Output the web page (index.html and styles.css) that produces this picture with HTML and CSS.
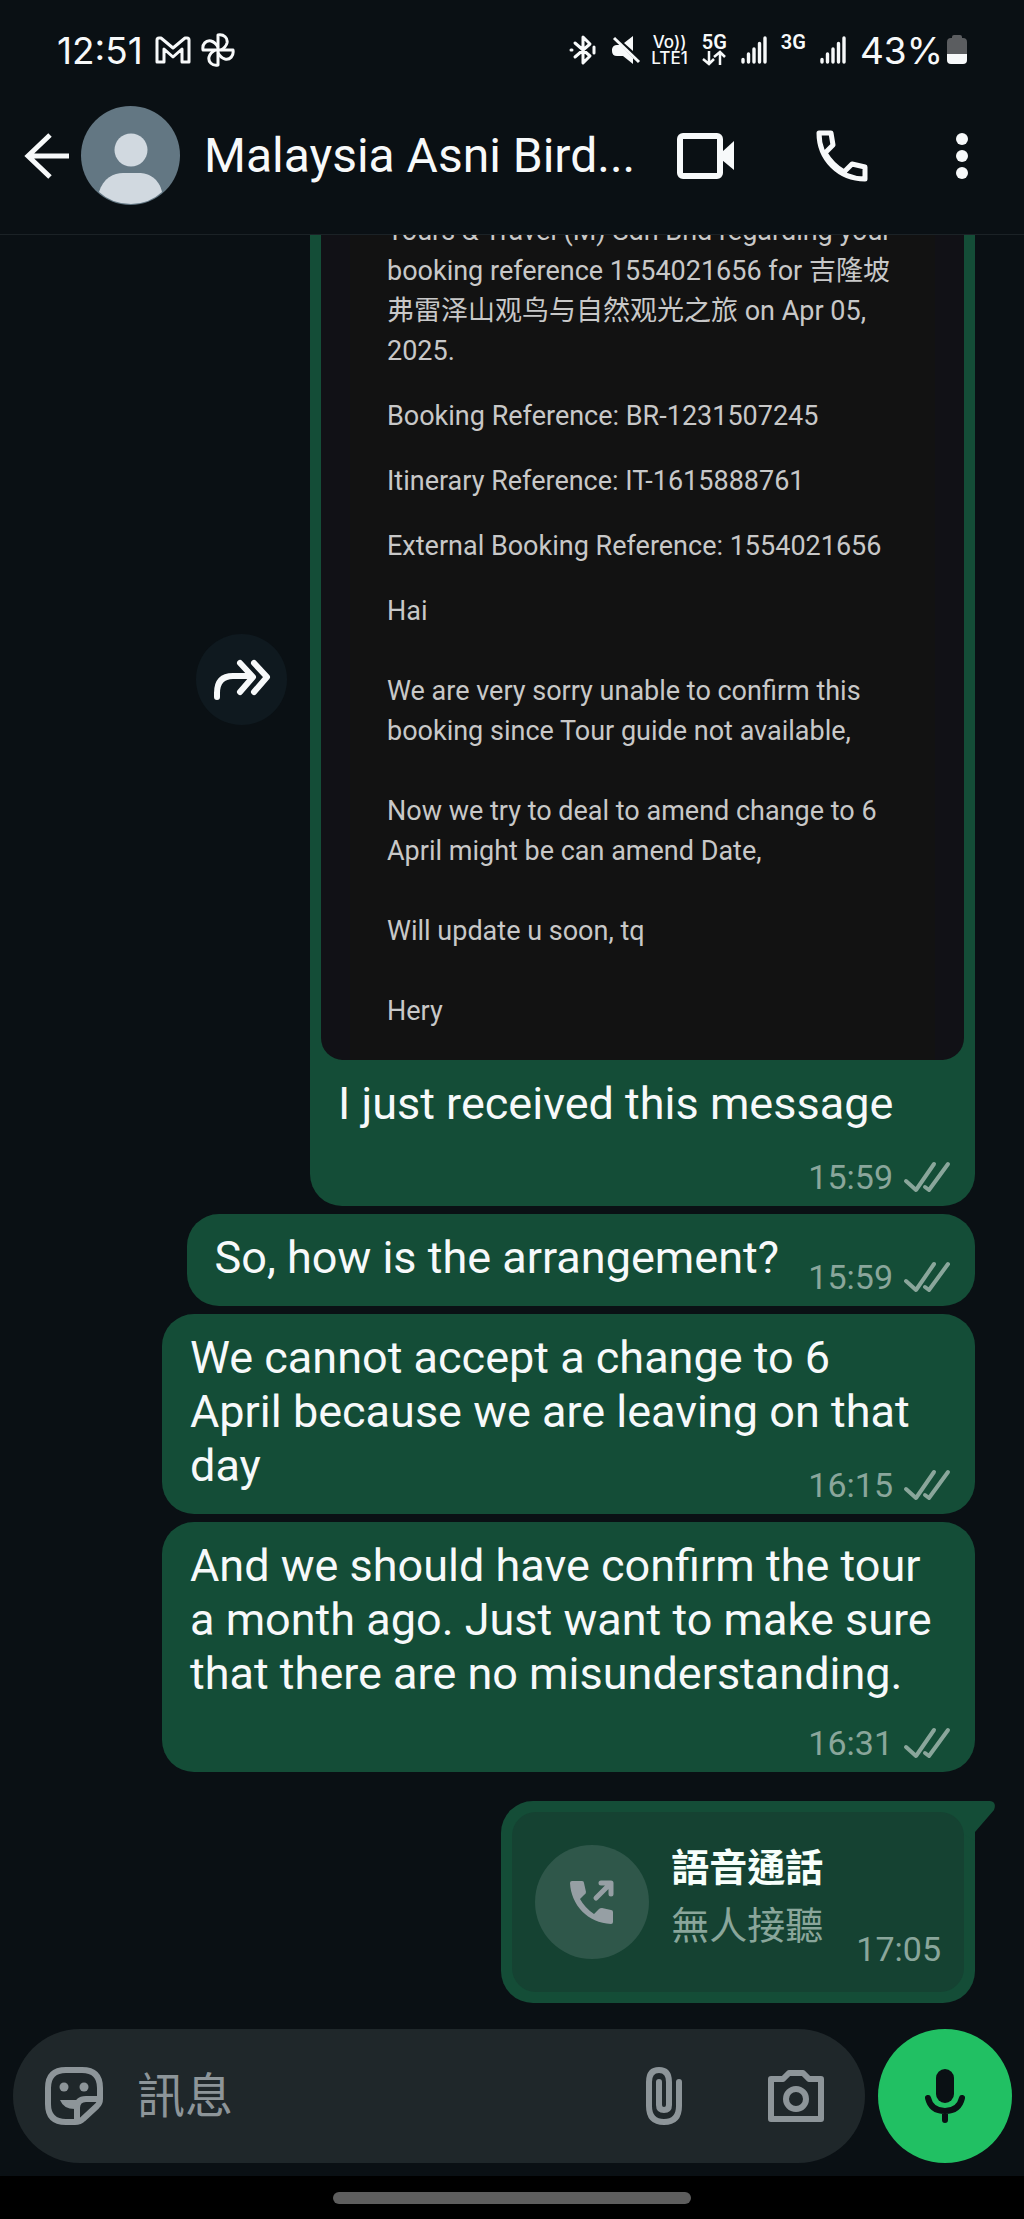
FILE: index.html
```html
<!DOCTYPE html>
<html lang="zh-Hant">
  <head>
    <meta charset="UTF-8" />
    <meta name="viewport" content="width=device-width, initial-scale=1.0" />
    <title>Malaysia Asni Bird</title>
    <link rel="stylesheet" href="styles.css">
  </head>
  <body>
    <!-- Shared icons -->
    <svg class="sprite" aria-hidden="true">
      <symbol id="ticks" viewBox="0 0 48 32">
        <path d="M3 20L13 29L31 3M22 26L26 29L45 3" fill="none" stroke="currentColor" stroke-width="4" stroke-linecap="round" stroke-linejoin="round" />
      </symbol>
      <symbol id="signal" viewBox="0 0 26 28">
        <path d="M2 23.500V26M7.500 18V26M13 13V26M18.500 7.500V26M24 2V26" fill="none" stroke="currentColor" stroke-width="3.400" stroke-linecap="round" />
      </symbol>
    </svg>

    <!-- Status bar -->
    <div class="status-bar">
      <span class="clock">12:51</span>
      <svg class="gmail" width="36" height="28" viewBox="0 0 36 28" fill="none" stroke="currentColor" stroke-width="3" stroke-linejoin="round">
        <path d="M2 4Q2 2 4 2H6L18 12L30 2H32Q34 2 34 4V26H27V13L18 21L9 13V26H2Z" />
      </svg>
      <svg width="34" height="34" viewBox="0 0 34 34" fill="none" stroke="currentColor" stroke-width="3" stroke-linejoin="round">
        <path d="M17 17V2C23 1 27 5 26 10Q25 14 20 17" />
        <path d="M17 17H32C33 23 29 27 24 26Q20 25 17 20" />
        <path d="M17 17V32C11 33 7 29 8 24Q9 20 14 17" />
        <path d="M17 17H2C1 11 5 7 10 8Q14 9 17 14" />
      </svg>
      <div class="status-right">
        <svg width="28" height="32" viewBox="0 0 28 32" fill="none" stroke="currentColor" stroke-width="3" stroke-linejoin="round" stroke-linecap="round">
          <path d="M6 9L21 22L14 29V3L21 10L6 23M2 16H3M25 13V19" />
        </svg>
        <svg class="mute" width="30" height="30" viewBox="0 0 30 30" fill="currentColor">
          <path d="M22 1V16L13 8ZM6 10H9L22 23V29L12 21H6Q1 21 1 16V14Q2 10 6 10Z" />
          <path d="M3 3L28 27" stroke="currentColor" stroke-width="3" />
        </svg>
        <span class="volte"><span>Vo))</span><span>LTE1</span></span>
        <span class="network">
          5G
          <svg width="24" height="16" viewBox="0 0 24 16" fill="none" stroke="currentColor" stroke-width="2.500">
            <path d="M7 1V14M1 9L7 14L12 9M18 15V2M12 7L18 2L23 7" />
          </svg>
        </span>
        <svg class="signal"><use href="#signal" /></svg>
        <span class="network">3G</span>
        <svg class="signal"><use href="#signal" /></svg>
        <span class="battery-level">43%</span>
        <svg width="20" height="30" viewBox="0 0 20 30" fill="currentColor">
          <path d="M5 2Q5 0 7 0H13Q15 0 15 2V3H16Q20 3 20 7V19H0V7Q0 3 4 3H5Z" fill="#5b5d60" />
          <path d="M0 19H20V25Q20 29 16 29H4Q0 29 0 25Z" />
        </svg>
      </div>
    </div>

    <!-- Chat header -->
    <header class="header">
      <button class="icon-button" aria-label="Back">
        <svg width="46" height="46" viewBox="0 0 46 46" fill="none" stroke="currentColor" stroke-width="5">
          <path d="M45 23H4M26 2L4 23L26 44" />
        </svg>
      </button>
      <svg class="avatar" viewBox="0 0 99 99">
        <circle cx="49.500" cy="49.500" r="49.500" fill="#637783" />
        <circle cx="50" cy="44" r="16.500" fill="#d1d9e0" />
        <path d="M18 86C22 72 33 67 42 67H58C67 67 78 72 81 86Q68 98 50 98Q31 98 18 86Z" fill="#d1d9e0" />
      </svg>
      <h1 class="title">Malaysia Asni Bird...</h1>
      <button class="icon-button" aria-label="Video call">
        <svg width="58" height="48" viewBox="0 0 58 48">
          <rect x="3" y="4" width="40" height="40" rx="3" fill="none" stroke="currentColor" stroke-width="6" />
          <path d="M45 20L57 9V38L45 28Z" fill="currentColor" />
        </svg>
      </button>
      <button class="icon-button call" aria-label="Voice call">
        <svg width="54" height="54" viewBox="0 0 54 54" fill="none" stroke="currentColor" stroke-width="5" stroke-linejoin="round">
          <path d="M4 4H16L18 16L10 24Q17 36 29 43L37 35L50 38V50C24 50 4 30 4 4Z" />
        </svg>
      </button>
      <button class="icon-button" aria-label="More options">
        <svg width="12" height="48" viewBox="0 0 12 48" fill="currentColor">
          <circle cx="6" cy="7" r="6" />
          <circle cx="6" cy="24" r="6" />
          <circle cx="6" cy="41" r="6" />
        </svg>
      </button>
    </header>

    <!-- Messages -->
    <main class="chat">
      <div class="row">
        <button class="forward" aria-label="Forward">
          <svg width="58" height="42" viewBox="0 0 58 42" fill="none" stroke="currentColor" stroke-width="6" stroke-linecap="round" stroke-linejoin="round">
            <path d="M4 38V34Q4 17 20 17H38M27 4L40 18L27 33M41 4L54 18L41 33" />
          </svg>
        </button>
        <div class="bubble photo-bubble">
          <div class="photo">
            <p>Tours &amp; Travel (M) Sdn Bhd regarding your<br>booking reference 1554021656 for 吉隆坡<br>弗雷泽山观鸟与自然观光之旅 on Apr 05,<br>2025.</p>
            <p>Booking Reference: BR-1231507245</p>
            <p>Itinerary Reference: IT-1615888761</p>
            <p>External Booking Reference: 1554021656</p>
            <p>Hai<br><br>We are very sorry unable to confirm this<br>booking since Tour guide not available,<br><br>Now we try to deal to amend change to 6<br>April might be can amend Date,<br><br>Will update u soon, tq<br><br>Hery</p>
          </div>
          <div class="message">
            <p class="text">I just received this message</p>
            <span class="meta">15:59 <svg class="ticks"><use href="#ticks" /></svg></span>
          </div>
        </div>
      </div>

      <div class="bubble message short">
        <p class="text">So, how is the arrangement?</p>
        <span class="meta">15:59 <svg class="ticks"><use href="#ticks" /></svg></span>
      </div>

      <div class="bubble message wide">
        <p class="text">We cannot accept a change to 6<br>April because we are leaving on that<br>day</p>
        <span class="meta">16:15 <svg class="ticks"><use href="#ticks" /></svg></span>
      </div>

      <div class="bubble message wide long">
        <p class="text">And we should have confirm the tour<br>a month ago. Just want to make sure<br>that there are no misunderstanding.</p>
        <span class="meta">16:31 <svg class="ticks"><use href="#ticks" /></svg></span>
      </div>

      <div class="bubble call-bubble">
        <svg class="tail" width="53" height="40" viewBox="0 0 53 40">
          <path d="M0 0H48Q55 1 52 9L33 31V40L0 20Z" fill="currentColor" />
        </svg>
        <div class="call-card">
          <div class="call-icon">
            <svg width="44" height="44" viewBox="0 0 44 44" fill="currentColor">
              <path d="M2 1H12Q14 1 14 3L16 12Q16 14 14 15L10 19Q15 28 24 34L29 29Q30 28 32 28L41 30Q43 30 43 32V42Q43 44 41 44C18 43 1 25 0 3Q0 1 2 1Z" />
              <path d="M26 18L39 5M31 3H41V14" fill="none" stroke="currentColor" stroke-width="5" stroke-linecap="round" stroke-linejoin="round" />
            </svg>
          </div>
          <div class="call-text">
            <strong>語音通話</strong>
            <span>無人接聽</span>
          </div>
          <span class="call-time">17:05</span>
        </div>
      </div>
    </main>

    <!-- Composer -->
    <form class="composer">
      <div class="composer-field">
        <button type="button" class="icon-button" aria-label="Stickers">
          <svg width="58" height="58" viewBox="0 0 58 58">
            <path d="M21 3H37Q55 3 55 21V32Q55 36 52 39L38 52Q35 55 30 55H21Q3 55 3 37V21Q3 3 21 3Z" fill="none" stroke="currentColor" stroke-width="6" />
            <path d="M32 54V41Q32 32 41 32H55" fill="none" stroke="currentColor" stroke-width="6" />
            <circle cx="19" cy="20" r="4.500" fill="currentColor" />
            <circle cx="39" cy="20" r="4.500" fill="currentColor" />
            <path d="M15 33H36L32 42Q19 43 15 33Z" fill="currentColor" />
          </svg>
        </button>
        <input type="text" class="composer-input" placeholder="訊息" aria-label="訊息" />
        <button type="button" class="icon-button" aria-label="Attach">
          <svg width="38" height="58" viewBox="0 0 38 58" fill="none" stroke="currentColor" stroke-width="6" stroke-linecap="round">
            <path d="M34 15V39Q34 55 19 55Q4 55 4 39V15Q4 3 14 3Q24 3 24 15V38Q24 43 19 43Q14 43 14 38V15" />
          </svg>
        </button>
        <button type="button" class="icon-button" aria-label="Camera">
          <svg width="58" height="52" viewBox="0 0 58 52" fill="none" stroke="currentColor" stroke-width="6" stroke-linejoin="round">
            <path d="M4 9H16L22 3H36L42 9H54V49H4Z" />
            <circle cx="29" cy="29" r="10" />
          </svg>
        </button>
      </div>
      <button type="button" class="mic" aria-label="Record voice message">
        <svg width="42" height="56" viewBox="0 0 42 56">
          <rect x="12" y="1" width="18" height="34" rx="9" fill="currentColor" />
          <path d="M4 30Q7 43 21 43Q35 43 38 30M21 43V52" fill="none" stroke="currentColor" stroke-width="6" stroke-linecap="round" />
        </svg>
      </button>
    </form>

    <div class="nav-bar"><div class="nav-handle"></div></div>
  </body>
</html>
```

FILE: styles.css
```css
* {
  box-sizing: border-box;
}
body {
  margin: 0;
  height: 100vh;
  display: flex;
  flex-direction: column;
  overflow: hidden;
  background: #0a1014;
  color: #f7f9fa;
  font-family: Roboto, "Noto Sans CJK TC", sans-serif;
}
svg {
  display: block;
  flex: none;
}
p,
h1 {
  margin: 0;
}
button {
  padding: 0;
  border: none;
  background: none;
  color: inherit;
  cursor: pointer;
}
.sprite {
  display: none;
}

/* Status bar */
.status-bar {
  display: flex;
  align-items: center;
  flex: none;
  height: 100px;
  padding: 0 57px;
  gap: 10px;
  font-family: Inter, sans-serif;
}
.clock,
.battery-level {
  font-size: 37px;
}
.clock {
  margin-right: 2px;
}
.status-right {
  display: flex;
  align-items: center;
  gap: 14px;
  margin-left: auto;
}
.mute {
  margin-right: -4px;
}
.volte {
  display: flex;
  flex-direction: column;
  align-items: center;
  font-size: 17px;
  font-weight: 500;
  line-height: 16px;
}
.network {
  height: 32px;
  font-family: Roboto, sans-serif;
  font-size: 20px;
  font-weight: 600;
  line-height: 16px;
}
.signal {
  width: 26px;
  height: 28px;
}
.battery-level {
  margin-right: -10px;
}

/* Header */
.header {
  display: flex;
  align-items: center;
  flex: none;
  padding: 6px 56px 29px 24px;
  border-bottom: 1px solid #1b2226;
}
.avatar {
  width: 99px;
  height: 99px;
  margin-left: 11px;
}
.title {
  flex: 1;
  min-width: 0;
  margin-left: 24px;
  overflow: hidden;
  white-space: nowrap;
  font-size: 48px;
  font-weight: 400;
  line-height: 60px;
}
.call {
  margin: 0 87px 0 80px;
}

/* Messages */
.chat {
  flex: 1;
  min-height: 0;
  display: flex;
  flex-direction: column;
  align-items: flex-end;
  justify-content: flex-end;
  gap: 8px;
  padding: 0 49px 26px;
  overflow: hidden;
}
.row {
  flex: none;
  display: flex;
  align-items: center;
  gap: 23px;
}
.forward {
  display: flex;
  align-items: center;
  justify-content: center;
  width: 91px;
  height: 91px;
  border-radius: 50%;
  background: #0f191f;
}
.bubble {
  flex: none;
  border-radius: 32px;
  background: #144d37;
}
.photo-bubble {
  width: 665px;
  padding-top: 11px;
}
.photo {
  margin: 0 11px;
  padding: 47px 37px 29px;
  border: solid #111116;
  border-width: 0 29px;
  border-radius: 22px;
  background: #121212;
  color: #c8c8c8;
  font-family: Roboto, "Noto Sans CJK SC", sans-serif;
  font-size: 27px;
  line-height: 40px;
  white-space: nowrap;
}
.photo p + p {
  margin-top: 25px;
}
.message {
  display: grid;
}
.text,
.meta {
  grid-area: 1 / 1;
}
.text {
  padding: 17px 28px 21px;
  font-size: 45px;
  line-height: 54px;
}
.long .text {
  padding-bottom: 71px;
}
.photo-bubble .text {
  padding-bottom: 75px;
}
.short .text {
  padding-right: 196px;
}
.wide {
  width: 813px;
}
.meta {
  display: flex;
  align-items: center;
  align-self: end;
  justify-self: end;
  gap: 10px;
  padding: 0 24px 9px 0;
}
.meta,
.call-time {
  color: #8aa69b;
  font-size: 34px;
  line-height: 40px;
}
.ticks {
  width: 48px;
  height: 32px;
}

/* Call log */
.call-bubble {
  position: relative;
  margin-top: 21px;
  padding: 11px;
}
.tail {
  position: absolute;
  top: 0;
  right: -20px;
  color: #144d37;
}
.call-card {
  position: relative;
  display: flex;
  align-items: center;
  height: 180px;
  padding: 0 23px;
  border-radius: 24px;
  background: #154232;
}
.call-icon {
  display: flex;
  align-items: center;
  justify-content: center;
  width: 114px;
  height: 114px;
  border-radius: 50%;
  background: #2f574a;
  color: #969fa4;
}
.call-text {
  display: flex;
  flex-direction: column;
  margin: 0 33px 10px 22px;
  color: #8aa69b;
  font-size: 38px;
  line-height: 58px;
}
.call-text strong {
  color: #f7fffb;
}
.call-time {
  align-self: flex-end;
  margin-bottom: 23px;
}

/* Composer */
.composer {
  flex: none;
  display: flex;
  gap: 13px;
  margin: 0 12px 13px 13px;
}
.composer-field {
  flex: 1;
  min-width: 0;
  display: flex;
  align-items: center;
  height: 134px;
  padding: 0 40px 0 32px;
  border-radius: 67px;
  background: #1f272a;
  color: #8d9599;
}
.composer-input {
  flex: 1;
  min-width: 0;
  margin: 0 34px;
  padding: 0;
  border: none;
  outline: none;
  background: none;
  color: #f7f9fa;
  font-family: inherit;
  font-size: 48px;
}
.composer-input::placeholder {
  color: #8d9599;
  opacity: 1;
}
.composer-input + .icon-button {
  margin-right: 84px;
}
.mic {
  display: flex;
  align-items: center;
  justify-content: center;
  width: 134px;
  height: 134px;
  border-radius: 50%;
  background: #21c063;
  color: #0a1014;
}

/* System navigation */
.nav-bar {
  flex: none;
  height: 43px;
  padding-top: 16px;
  background: #000;
}
.nav-handle {
  width: 35%;
  height: 12px;
  margin: 0 auto;
  border-radius: 6px;
  background: #5e5e5e;
}
```
